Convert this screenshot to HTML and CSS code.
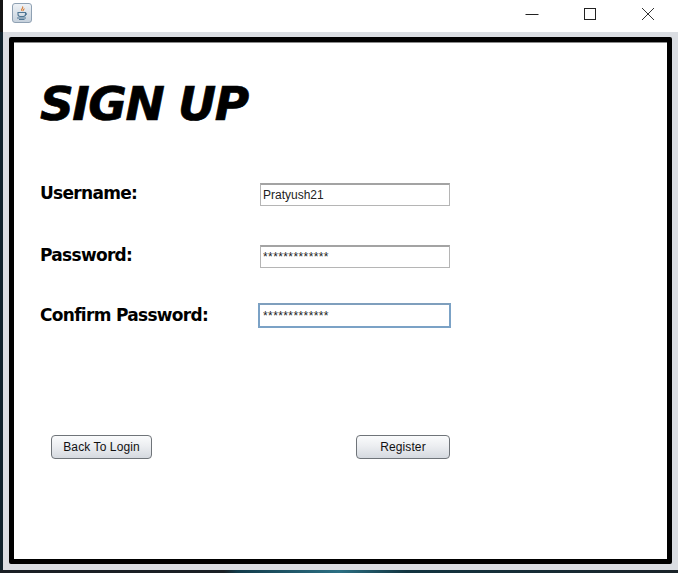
FILE: index.html
```html
<!DOCTYPE html>
<html lang="en">
<head>
<meta charset="utf-8">
<title>Sign Up</title>
<link rel="stylesheet" href="styles.css">
</head>
<body>
<div class="screen">
  <div class="window">
    <header class="titlebar">
      <div class="appicon">
        <svg viewBox="0 0 18 18" width="18" height="18">
          <path d="M9.500 2.500c1.500 1.500-2 2.500-.8 4.200M11 4.500c.5 1-1.500 1.500-.8 2.600" fill="none" stroke="#d9782d" stroke-width="1.100"/>
          <path d="M5 8.500h7.500v1.800c0 1.400-1 2.200-2.200 2.200H7.200C6 12.500 5 11.700 5 10.300z" fill="none" stroke="#4d7593" stroke-width="1.100"/>
          <path d="M12.500 9.200c1.600-.4 1.800 1.700-.4 2" fill="none" stroke="#4d7593"/>
          <path d="M4 14h9M6 15.500h5.500" stroke="#4d7593" stroke-width="1"/>
        </svg>
      </div>
      <div class="controls">
        <svg class="ctl ctl-min" viewBox="0 0 14 14" width="14" height="14"><path d="M0.500 7.500h13" stroke="#222" fill="none"/></svg>
        <svg class="ctl ctl-max" viewBox="0 0 14 14" width="14" height="14"><rect x="1.500" y="1.500" width="11" height="11" stroke="#222" fill="none"/></svg>
        <svg class="ctl ctl-close" viewBox="0 0 14 14" width="14" height="14"><path d="M1 1l12 12M13 1L1 13" stroke="#333" fill="none"/></svg>
      </div>
    </header>
    <main class="frame">
      <section class="panel">
        <h1 class="heading">SIGN UP</h1>
        <form class="fields">
          <div class="row row-user">
            <label class="label" for="u">Username:</label>
            <input class="field" id="u" type="text" value="Pratyush21">
          </div>
          <div class="row row-pass">
            <label class="label" for="p">Password:</label>
            <input class="field field-stars" id="p" type="text" value="*************">
          </div>
          <div class="row row-confirm">
            <label class="label" for="c">Confirm Password:</label>
            <input class="field field-stars field-focus" id="c" type="text" value="*************">
          </div>
          <div class="actions">
            <button class="btn btn-back" type="button">Back To Login</button>
            <button class="btn btn-register" type="button">Register</button>
          </div>
        </form>
      </section>
    </main>
  </div>
  <div class="wallpaper"></div>
</div>
</body>
</html>
```
FILE: styles.css
```css
* { box-sizing: border-box; }
html, body { margin: 0; padding: 0; }
body { width: 678px; height: 573px; overflow: hidden; background: #10222c; font-family: "Liberation Sans", Arial, sans-serif; }
.screen { display: flex; flex-direction: column; height: 573px; }
.window { height: 570px; margin-left: 3px; display: flex; flex-direction: column; background: #dadde2; }
.titlebar { height: 32px; background: #fff; display: flex; align-items: center; justify-content: space-between; padding: 0 0 7px 9px; box-shadow: -3px 0 0 #141414; }
.appicon { width: 20px; height: 20px; border: 1px solid #8fa1b3; border-radius: 3px; background: linear-gradient(#eef2f6, #c6d1dc); display: flex; align-items: center; justify-content: center; }
.controls { display: flex; align-items: center; gap: 44px; padding-right: 23px; padding-top: 3px; }
.ctl { display: block; }
.frame { flex: 1; padding: 5px 6px 6px 6px; display: flex; }
.panel { flex: 1; border: 5px solid #000; border-radius: 2px; background: #fff; padding: 0 0 0 26px; box-shadow: inset 0 1px 0 #8a8a8a; }
.heading { margin: 31px 0 0; height: 61px; font: italic bold 47px/61px "DejaVu Sans", sans-serif; letter-spacing: -1.500px; -webkit-text-stroke: .7px #000; color: #000; }
.fields { margin: 0; }
.row { display: flex; align-items: center; height: 23px; }
.row-user { margin-top: 49px; }
.row-pass { margin-top: 39px; }
.row-confirm { margin-top: 35px; height: 25px; }
.label { width: 219px; font: bold 17px/23px "DejaVu Sans", sans-serif; letter-spacing: -.7px; color: #000; position: relative; top: -1px; }
.row-confirm .label { top: 0; }
.field { width: 190px; height: 23px; margin: 0 0 0 1px; padding: 0 2px; border: 1px solid #b5b5b5; border-top: 2px solid #a3a3a3; background: #fff; outline: none; font: 12px "Liberation Sans", Arial, sans-serif; color: #222; }
.field-stars { letter-spacing: .4px; }
.field-focus { width: 193px; height: 25px; margin-left: -1px; padding: 0 3px; border: 2px solid #7ba2c6; border-top-color: #7f9fbd; }
.actions { display: flex; margin-top: 107px; padding-left: 11px; }
.btn { height: 24px; padding: 0; border: 1px solid #6f7479; border-radius: 4px; background: linear-gradient(#fafbfc, #eceef1 45%, #d5d9df); font: 12px "Liberation Sans", Arial, sans-serif; letter-spacing: .1px; color: #111; }
.btn-back { width: 101px; }
.btn-register { width: 94px; margin-left: 204px; }
.wallpaper { height: 3px; background: linear-gradient(90deg, #1a1f24 0 33%, #123b4a 35%, #2b6f83 50%, #123440 60%, #1a2228 100%); }
```
